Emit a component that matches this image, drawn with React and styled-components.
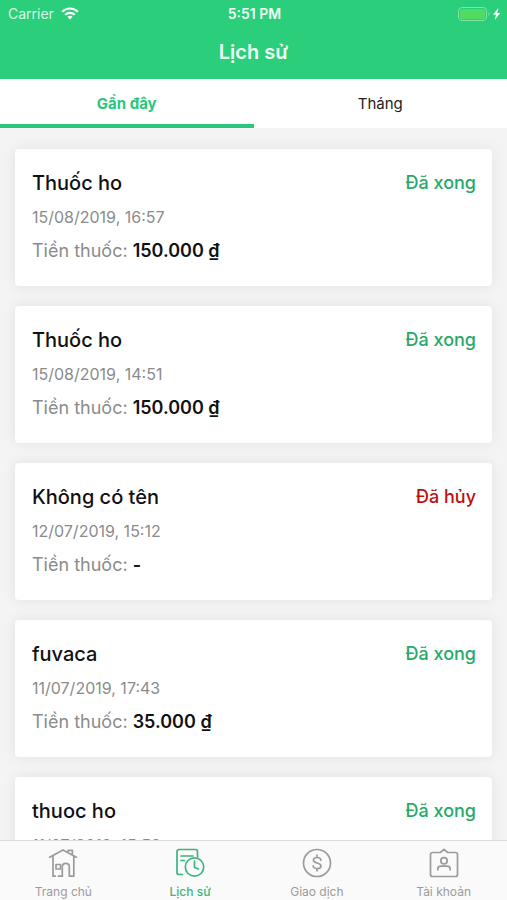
import React, { useState } from "react";
import styled, { createGlobalStyle } from "styled-components";

const GlobalStyle = createGlobalStyle`
  * { box-sizing: border-box; }
  body { margin: 0; }
  button { font: inherit; border: 0; padding: 0; background: none; cursor: pointer; }
`;

const Screen = styled.div`
  display: flex;
  flex-direction: column;
  height: 100vh;
  background: #f4f4f4;
  color: #111;
  font-family: Inter, "Noto Sans", sans-serif;
`;

const Header = styled.header`
  flex: none;
  background: #2bce7b;
  color: #eefff5;
`;

const StatusBar = styled.div`
  display: grid;
  grid-template-columns: 1fr auto 1fr;
  align-items: center;
  height: 27px;
  padding: 0 6px 0 8px;
  font-size: 14px;
  line-height: 20px;
`;

const Carrier = styled.div`
  display: flex;
  align-items: center;
  gap: 7px;
  color: #d8f8e6;
`;

const Clock = styled.time`
  font-size: 14px;
  font-weight: 600;
`;

const Power = styled.div`
  display: flex;
  justify-content: flex-end;
`;

const Title = styled.h1`
  margin: 0;
  height: 52px;
  font-size: 20px;
  font-weight: 600;
  line-height: 50px;
  text-align: center;
`;

const Tabs = styled.div`
  flex: none;
  display: grid;
  grid-template-columns: 1fr 1fr;
  background: #fff;
`;

const Tab = styled.button`
  && {
    height: 49px;
    padding-top: 4px;
    border-bottom: 4px solid ${(p) => (p.$active ? "#2bc57c" : "transparent")};
    color: ${(p) => (p.$active ? "#2bc57c" : "#222")};
    font-size: 15px;
    font-weight: ${(p) => (p.$active ? 700 : 400)};
  }
`;

const List = styled.main`
  flex: 1;
  min-height: 0;
  display: flex;
  flex-direction: column;
  gap: 20px;
  padding: 21px 15px;
  overflow-y: auto;
  scrollbar-width: none;
`;

const Card = styled.article`
  flex: none;
  padding: 20px 16px 22px 17px;
  border-radius: 4px;
  background: #fff;
  box-shadow: 0 0 14px rgba(0, 0, 0, 0.08);
`;

const CardTop = styled.div`
  display: flex;
  justify-content: space-between;
  align-items: center;
`;

const Name = styled.h2`
  margin: 0;
  font-size: 20px;
  font-weight: 500;
  line-height: 28px;
`;

const Status = styled.span`
  color: ${(p) => (p.$cancelled ? "#c00d0d" : "#27a969")};
  font-size: 18px;
  font-weight: 500;
  line-height: 28px;
`;

const Moment = styled.time`
  display: block;
  margin-top: 8px;
  color: #8b8b8b;
  font-size: 16px;
  line-height: 24px;
`;

const Cost = styled.p`
  margin: 9px 0 0;
  color: #8b8b8b;
  font-size: 18px;
  line-height: 26px;
`;

const Amount = styled.strong`
  color: #111;
  font-weight: 600;
`;

const BottomNav = styled.nav`
  flex: none;
  display: grid;
  grid-template-columns: repeat(4, 1fr);
  height: 60px;
  border-top: 1px solid #dcdcdc;
  background: #fafafa;
`;

const NavLink = styled.a`
  display: flex;
  flex-direction: column;
  align-items: center;
  padding-top: 7px;
  gap: 6px;
  color: ${(p) => (p.$active ? "#3cb47c" : "#9b9b9b")};
  font-size: 12px;
  font-weight: ${(p) => (p.$active ? 500 : 400)};
  line-height: 16px;
  text-decoration: none;
`;

const Glyph = styled.svg.attrs({
  viewBox: "0 0 30 30",
  width: 30,
  height: 30,
  "aria-hidden": true,
})`
  fill: none;
  stroke: currentColor;
  stroke-width: 1.7;
  stroke-linecap: round;
  stroke-linejoin: round;
`;

const WifiIcon = () => (
  <svg width="18" height="13" viewBox="0 0 18 13" fill="none" stroke="#fff" strokeWidth="2.2" aria-label="Wi-Fi">
    <path d="M1.2 4.8c4.3-4.4 11.3-4.4 15.6 0M4.2 7.8c2.7-2.7 6.900-2.7 9.6 0" />
    <path d="M6.4 9.8c1.5-1.3 3.7-1.3 5.2 0L9 12.6z" fill="#fff" stroke="none" />
  </svg>
);

const BatteryIcon = () => (
  <svg width="44" height="16" viewBox="0 0 44 16" fill="none" aria-label="Charging">
    <rect x="1.5" y="1.5" width="28" height="13" rx="3.5" stroke="#83e3a6" />
    <rect x="3" y="3" width="25" height="10" rx="2" fill="#50dc62" />
    <path d="M31.5 6c1.3.6 1.3 3.4 0 4z" fill="#83e3a6" />
    <path d="M41.5 1.8L36 8.8h3l-1.2 5.2 5.4-7h-3z" fill="#fff" />
  </svg>
);

const HomeIcon = () => (
  <Glyph>
    <path d="M1.6 9.3L15 2l13.4 7.3M20.200 4.7V2.300h4.200V7" />
    <path d="M5 8.200v20h2.200M10.500 28.200h3.800v-9.400c0-4.500 7-4.500 7 0v9.400h4.500v-20" />
    <rect x="8" y="16.500" width="4.500" height="4.500" />
  </Glyph>
);

const HistoryIcon = () => (
  <Glyph>
    <path d="M7.500 26.500H4a2 2 0 0 1-2-2V3.500a2 2 0 0 1 2-2h16.500a2 2 0 0 1 2 2v5.500M6 8h12M6 12.500h3.500" />
    <circle cx="19.500" cy="19" r="9.200" />
    <path d="M19.500 13v6.500l4 1.500" />
  </Glyph>
);

const MoneyIcon = () => (
  <Glyph>
    <circle cx="15" cy="15" r="13.500" />
    <path d="M15 7.200v2.300M15 20.500v2.300M18.800 12.200c0-3.600-7.400-3.600-7.400 0 0 3.400 7.600 2.300 7.600 5.700 0 3.500-7.800 3.500-7.800 0" />
  </Glyph>
);

const AccountIcon = () => (
  <Glyph>
    <path d="M3.500 4.500h7.700L15 1.500l3.800 3h7.700a2 2 0 0 1 2 2v20a2 2 0 0 1-2 2h-23a2 2 0 0 1-2-2v-20a2 2 0 0 1 2-2z" />
    <circle cx="15" cy="12.800" r="3.200" />
    <path d="M8.800 21.800v-.8c0-2 1.600-2.800 3.200-2.800h6c1.600 0 3.200.8 3.200 2.800v.8" />
  </Glyph>
);

const orders = [
  { name: "Thuốc ho", time: "15/08/2019, 16:57", amount: "150.000 ₫" },
  { name: "Thuốc ho", time: "15/08/2019, 14:51", amount: "150.000 ₫" },
  { name: "Không có tên", time: "12/07/2019, 15:12", amount: "-", cancelled: true },
  { name: "fuvaca", time: "11/07/2019, 17:43", amount: "35.000 ₫" },
  { name: "thuoc ho", time: "11/07/2019, 15:52", amount: "35.000 ₫" },
];

const links = [
  { label: "Trang chủ", Icon: HomeIcon },
  { label: "Lịch sử", Icon: HistoryIcon, active: true },
  { label: "Giao dịch", Icon: MoneyIcon },
  { label: "Tài khoản", Icon: AccountIcon },
];

export default function App() {
  const [tab, setTab] = useState("Gần đây");
  return (
    <Screen>
      <GlobalStyle />
      <Header>
        <StatusBar>
          <Carrier>
            Carrier <WifiIcon />
          </Carrier>
          <Clock>5:51 PM</Clock>
          <Power>
            <BatteryIcon />
          </Power>
        </StatusBar>
        <Title>Lịch sử</Title>
      </Header>
      <Tabs role="tablist">
        {["Gần đây", "Tháng"].map((label) => (
          <Tab
            key={label}
            role="tab"
            aria-selected={tab === label}
            $active={tab === label}
            onClick={() => setTab(label)}
          >
            {label}
          </Tab>
        ))}
      </Tabs>
      <List>
        {orders.map((o) => (
          <Card key={o.time}>
            <CardTop>
              <Name>{o.name}</Name>
              <Status $cancelled={o.cancelled}>{o.cancelled ? "Đã hủy" : "Đã xong"}</Status>
            </CardTop>
            <Moment>{o.time}</Moment>
            <Cost>
              Tiền thuốc: <Amount>{o.amount}</Amount>
            </Cost>
          </Card>
        ))}
      </List>
      <BottomNav>
        {links.map(({ label, Icon, active }) => (
          <NavLink key={label} href="#" $active={active}>
            <Icon />
            {label}
          </NavLink>
        ))}
      </BottomNav>
    </Screen>
  );
}
